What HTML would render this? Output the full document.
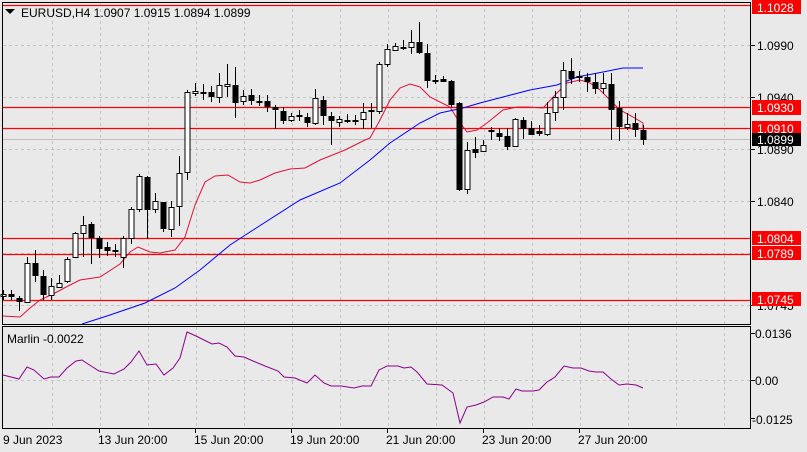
<!DOCTYPE html>
<html><head><meta charset="utf-8"><style>
html,body{margin:0;padding:0;background:#e9e9e9;}
svg{display:block;font-family:"Liberation Sans",sans-serif;}
</style></head><body>
<svg width="807" height="452" viewBox="0 0 807 452" xmlns="http://www.w3.org/2000/svg">
<rect width="807" height="452" fill="#e9e9e9"/>
<!-- grid -->
<g stroke="#c4c4c4" stroke-dasharray="3,3" stroke-width="1">
<path d="M52.5 3V324M100.5 3V324M148.5 3V324M196.5 3V324M244.5 3V324M292.5 3V324M340.5 3V324M388.5 3V324M436.5 3V324M484.5 3V324M532.5 3V324M580.5 3V324M628.5 3V324M676.5 3V324M724.5 3V324"/>
<path d="M52.5 327V428M100.5 327V428M148.5 327V428M196.5 327V428M244.5 327V428M292.5 327V428M340.5 327V428M388.5 327V428M436.5 327V428M484.5 327V428M532.5 327V428M580.5 327V428M628.5 327V428M676.5 327V428M724.5 327V428"/>
<path d="M3 45.5H750M3 97.5H750M3 149.5H750M3 201.5H750M3 253.5H750M3 305.5H750M3 380.5H750"/>
</g>
<line x1="3" y1="139.5" x2="750" y2="139.5" stroke="#c0c0c0"/>
<!-- red levels -->
<g stroke="#ff0000" stroke-width="1.2">
<path d="M3 5.5H750M3 107.5H750M3 128.5H750M3 238.5H750M3 254.5H750M3 300.5H750"/>
</g>
<!-- MAs -->
<polyline fill="none" stroke="#e0103a" stroke-width="1" points="3,316 20,317 30,308 40,300 55,293 70,285 80,280 100,277 120,264 130,252 138,247 150,252 160,253 175,250 185,237 195,205 205,182 215,176 228,175 240,182 250,183 260,180 275,173 290,169 305,168 320,160 345,150 365,140 370,138 380,120 390,100 400,88 410,84 420,87 430,97 450,107 458,120 467,132 477,130 487,123 503,110 517,107 527,107 543,108 557,93 567,83 580,80 590,83 600,90 610,100 620,110 633,117 643,123 643,130"/>
<polyline fill="none" stroke="#0000ff" stroke-width="1" points="82,324 110,315 145,303 175,288 200,270 230,245 250,232 300,200 340,183 370,160 390,143 420,123 440,113 463,108 480,103 503,97 530,90 557,85 577,77 603,72 623,68 643,68"/>
<!-- candles -->
<g stroke="#000" stroke-width="1">
<path d="M3.5 290V300M11.5 290V300M19.5 296V311M27.5 257V303M35.5 250V282M43.5 270V300M51.5 278V300M59.5 275V288M67.5 257V283M75.5 232V258M83.5 216V257M91.5 222V264M99.5 236V258M107.5 242V256M115.5 244V257M123.5 236V268M131.5 207V244M139.5 174V212M147.5 176V239M155.5 193V213M163.5 202V232M171.5 201V237M179.5 156V226M187.5 90V180M195.5 83V96M203.5 84V100M211.5 86V102M219.5 73V103M227.5 64V97M235.5 67V118M243.5 90V105M251.5 89V105M259.5 95V106M267.5 95V112M275.5 105V129M283.5 107V124M291.5 113V122M299.5 110V121M307.5 113V127M315.5 89V125M323.5 96V125M331.5 112V145M339.5 116V127M347.5 114V123M355.5 115V125M363.5 103V129M371.5 103V128M379.5 62V114M387.5 44V67M395.5 43V51M403.5 40V50M411.5 30V54M419.5 22V54M427.5 44V88M435.5 75V84M443.5 76V82M451.5 80V107M459.5 102V191M467.5 142V194M475.5 137V158M483.5 140V152M491.5 127V140M499.5 128V141M507.5 128V150M515.5 118V147M523.5 117V139M531.5 121V135M539.5 125V136M547.5 102V136M555.5 91V121M563.5 62V110M571.5 58V84M579.5 71V82M587.5 73V92M595.5 73V94M603.5 73V94M611.5 73V140M619.5 101V141M627.5 113V130M635.5 113V137M643.5 125V145"/>
</g>
<g stroke="#000" stroke-width="1">
<rect x="1" y="294.5" width="5" height="2" fill="#fff"/>
<rect x="9" y="294.5" width="5" height="2" fill="#000"/>
<rect x="17" y="298.5" width="5" height="3" fill="#000"/>
<rect x="25" y="263.5" width="5" height="39" fill="#fff"/>
<rect x="33" y="263.5" width="5" height="12" fill="#000"/>
<rect x="41" y="276.5" width="5" height="18" fill="#000"/>
<rect x="49" y="286.5" width="5" height="9" fill="#fff"/>
<rect x="57" y="283.5" width="5" height="4" fill="#fff"/>
<rect x="65" y="259.5" width="5" height="22" fill="#fff"/>
<rect x="73" y="233.5" width="5" height="24" fill="#fff"/>
<rect x="81" y="225.5" width="5" height="8" fill="#fff"/>
<rect x="89" y="224.5" width="5" height="13" fill="#000"/>
<rect x="97" y="238.5" width="5" height="10" fill="#000"/>
<rect x="105" y="247.5" width="5" height="3" fill="#000"/>
<rect x="113" y="250.5" width="5" height="1" fill="#000"/>
<rect x="121" y="238.5" width="5" height="19" fill="#fff"/>
<rect x="129" y="209.5" width="5" height="29" fill="#fff"/>
<rect x="137" y="176.5" width="5" height="33" fill="#fff"/>
<rect x="145" y="177.5" width="5" height="32" fill="#000"/>
<rect x="153" y="201.5" width="5" height="8" fill="#fff"/>
<rect x="161" y="202.5" width="5" height="26" fill="#000"/>
<rect x="169" y="207.5" width="5" height="22" fill="#fff"/>
<rect x="177" y="173.5" width="5" height="33" fill="#fff"/>
<rect x="185" y="92.5" width="5" height="80" fill="#fff"/>
<rect x="193" y="91.5" width="5" height="2" fill="#fff"/>
<rect x="201" y="92.5" width="5" height="1" fill="#000"/>
<rect x="209" y="92.5" width="5" height="4" fill="#000"/>
<rect x="217" y="85.5" width="5" height="12" fill="#fff"/>
<rect x="225" y="84.5" width="5" height="2" fill="#fff"/>
<rect x="233" y="85.5" width="5" height="17" fill="#000"/>
<rect x="241" y="96.5" width="5" height="5" fill="#fff"/>
<rect x="249" y="95.5" width="5" height="5" fill="#000"/>
<rect x="257" y="101.5" width="5" height="1" fill="#000"/>
<rect x="265" y="101.5" width="5" height="5" fill="#000"/>
<rect x="273" y="107.5" width="5" height="2" fill="#000"/>
<rect x="281" y="111.5" width="5" height="9" fill="#000"/>
<rect x="289" y="116.5" width="5" height="4" fill="#fff"/>
<rect x="297" y="115.5" width="5" height="1" fill="#000"/>
<rect x="305" y="117.5" width="5" height="5" fill="#000"/>
<rect x="313" y="98.5" width="5" height="25" fill="#fff"/>
<rect x="321" y="100.5" width="5" height="15" fill="#000"/>
<rect x="329" y="116.5" width="5" height="4" fill="#000"/>
<rect x="337" y="119.5" width="5" height="3" fill="#fff"/>
<rect x="345" y="120.5" width="5" height="1" fill="#000"/>
<rect x="353" y="120.5" width="5" height="1" fill="#000"/>
<rect x="361" y="112.5" width="5" height="7" fill="#fff"/>
<rect x="369" y="110.5" width="5" height="1" fill="#000"/>
<rect x="377" y="64.5" width="5" height="47" fill="#fff"/>
<rect x="385" y="49.5" width="5" height="15" fill="#fff"/>
<rect x="393" y="46.5" width="5" height="4" fill="#fff"/>
<rect x="401" y="47.5" width="5" height="1" fill="#000"/>
<rect x="409" y="42.5" width="5" height="5" fill="#fff"/>
<rect x="417" y="42.5" width="5" height="10" fill="#000"/>
<rect x="425" y="53.5" width="5" height="27" fill="#000"/>
<rect x="433" y="80.5" width="5" height="1" fill="#000"/>
<rect x="441" y="79.5" width="5" height="2" fill="#000"/>
<rect x="449" y="81.5" width="5" height="23" fill="#000"/>
<rect x="457" y="103.5" width="5" height="86" fill="#000"/>
<rect x="465" y="150.5" width="5" height="39" fill="#fff"/>
<rect x="473" y="149.5" width="5" height="3" fill="#000"/>
<rect x="481" y="145.5" width="5" height="6" fill="#fff"/>
<rect x="489" y="130.5" width="5" height="1" fill="#000"/>
<rect x="497" y="133.5" width="5" height="3" fill="#000"/>
<rect x="505" y="136.5" width="5" height="10" fill="#000"/>
<rect x="513" y="119.5" width="5" height="27" fill="#fff"/>
<rect x="521" y="120.5" width="5" height="8" fill="#000"/>
<rect x="529" y="128.5" width="5" height="6" fill="#000"/>
<rect x="537" y="131.5" width="5" height="2" fill="#000"/>
<rect x="545" y="113.5" width="5" height="21" fill="#fff"/>
<rect x="553" y="97.5" width="5" height="15" fill="#fff"/>
<rect x="561" y="70.5" width="5" height="27" fill="#fff"/>
<rect x="569" y="71.5" width="5" height="7" fill="#000"/>
<rect x="577" y="76.5" width="5" height="1" fill="#000"/>
<rect x="585" y="77.5" width="5" height="4" fill="#000"/>
<rect x="593" y="82.5" width="5" height="6" fill="#000"/>
<rect x="601" y="83.5" width="5" height="5" fill="#fff"/>
<rect x="609" y="84.5" width="5" height="25" fill="#000"/>
<rect x="617" y="108.5" width="5" height="18" fill="#000"/>
<rect x="625" y="124.5" width="5" height="3" fill="#fff"/>
<rect x="633" y="123.5" width="5" height="6" fill="#000"/>
<rect x="641" y="130.5" width="5" height="9" fill="#000"/>
</g>
<!-- Marlin -->
<polyline fill="none" stroke="#8b008b" stroke-width="1" points="3,375 19,379 27,367 34,370 44,379 51,377 59,377 67,368 76,361 82,360 88,364 99,371 114,374 124,369 131,362 139,351 147,365 156,364 164,375 173,368 180,358 187,332 196,336 204,340 212,344 219,343 227,347 235,356 244,357 253,361 265,366 278,371 284,377 295,378 307,383 315,375 324,383 331,386 341,386 354,388 362,386 371,386 379,370 387,366 398,366 404,368 411,367 417,372 427,384 442,385 453,393 460,423 467,407 476,405 484,402 493,397 503,397 509,399 516,389 522,391 533,391 539,390 547,382 555,377 564,366 573,368 581,368 589,371 596,372 603,372 611,379 619,385 627,384 636,385 643,388"/>
<!-- frames -->
<rect x="2.5" y="2.5" width="748" height="322" fill="none" stroke="#000"/>
<rect x="2.5" y="326.5" width="748" height="102" fill="none" stroke="#000"/>
<!-- axis ticks -->
<g stroke="#000"><path d="M751 45.5H755M751 97.5H755M751 149.5H755M751 201.5H755M751 305.5H755M751 333.5H755M751 380.5H755M751 418.5H755M99.5 429V433M195.5 429V433M291.5 429V433M387.5 429V433M483.5 429V433M579.5 429V433"/></g>
<!-- header -->
<path d="M5 9h10l-5 5z" fill="#000"/>
<text x="21" y="17" font-size="12" fill="#000">EURUSD,H4  1.0907 1.0915 1.0894 1.0899</text>
<text x="7" y="343" font-size="12" fill="#000">Marlin -0.0022</text>
<!-- price labels -->
<g font-size="12" fill="#000">
<text x="757" y="50">1.0990</text>
<text x="757" y="102">1.0940</text>
<text x="757" y="154">1.0890</text>
<text x="757" y="206">1.0840</text>
<text x="757" y="310">1.0745</text>
<text x="755" y="338">0.0136</text>
<text x="755" y="385">0.00</text>
<text x="752" y="424">-0.0125</text>
</g>
<g font-size="12">
<rect x="752" y="0" width="49" height="14" fill="#ff0000"/><text x="757" y="12" fill="#fff">1.1028</text>
<rect x="752" y="100" width="49" height="15" fill="#ff0000"/><text x="757" y="112" fill="#fff">1.0930</text>
<rect x="752" y="121" width="49" height="14" fill="#ff0000"/><text x="757" y="133" fill="#fff">1.0910</text>
<rect x="752" y="133" width="49" height="13" fill="#000"/><text x="757" y="144" fill="#fff">1.0899</text>
<rect x="752" y="231" width="49" height="14" fill="#ff0000"/><text x="757" y="243" fill="#fff">1.0804</text>
<rect x="752" y="246" width="49" height="14" fill="#ff0000"/><text x="757" y="258" fill="#fff">1.0789</text>
<rect x="752" y="292" width="49" height="14" fill="#ff0000"/><text x="757" y="304" fill="#fff">1.0745</text>
</g>
<!-- time labels -->
<g font-size="12" fill="#000">
<text x="3" y="444">9 Jun 2023</text>
<text x="98" y="444">13 Jun 20:00</text>
<text x="194" y="444">15 Jun 20:00</text>
<text x="290" y="444">19 Jun 20:00</text>
<text x="386" y="444">21 Jun 20:00</text>
<text x="482" y="444">23 Jun 20:00</text>
<text x="578" y="444">27 Jun 20:00</text>
</g>
</svg>
</body></html>
